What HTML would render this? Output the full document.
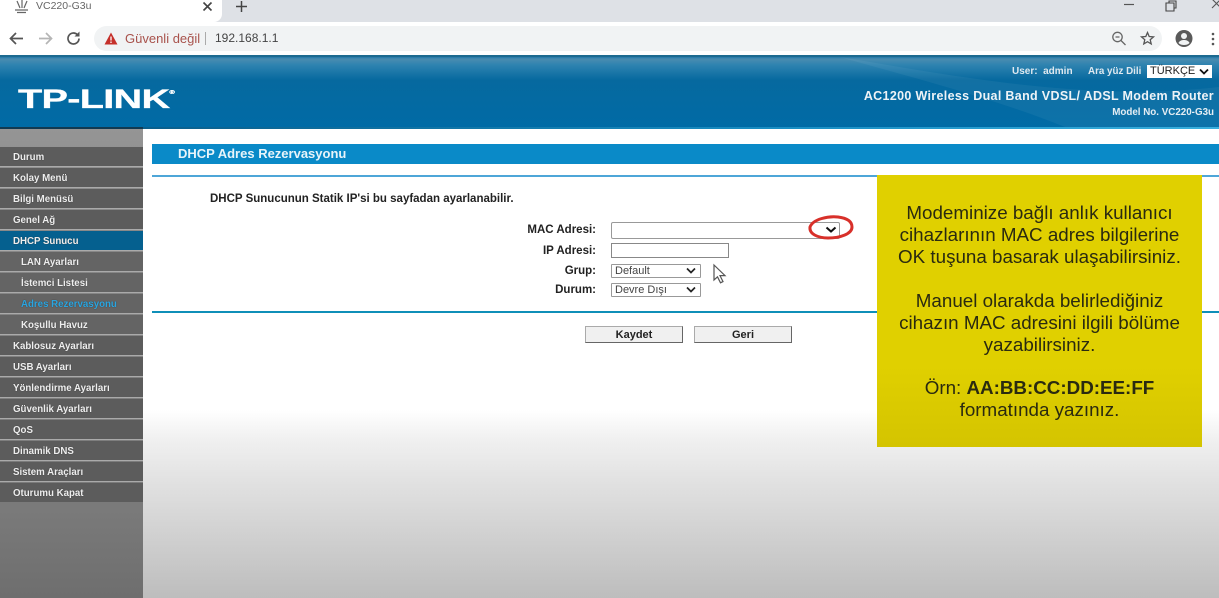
<!DOCTYPE html>
<html><head><meta charset="utf-8">
<style>
html,body{margin:0;padding:0;width:1219px;height:598px;overflow:hidden;background:#fff;font-family:"Liberation Sans",sans-serif}
.a{position:absolute;white-space:nowrap}
.m{position:absolute;left:0;width:143px;height:19px;background:#5c5c5c;color:#eee;font:bold 9.700px/21px "Liberation Sans",sans-serif;padding-left:13px;box-sizing:border-box;text-shadow:0 0 1px #333;box-shadow:0 1px 0 #aaa}
.s{padding-left:21px;background:#646464}
.l{position:absolute;text-align:right;left:440px;width:156px;font:bold 11.500px/14px "Liberation Sans",sans-serif;color:#222}
.sel{position:absolute;left:611px;height:14px;box-sizing:border-box;border:1px solid #999;background:#fff;font:11px/13px "Liberation Sans",sans-serif;color:#444;padding-left:3px;border-radius:1px}
.b{position:absolute;top:326px;width:98px;height:17px;box-sizing:border-box;background:#f0f0f0;border:1px solid #666;border-top-color:#aaa;border-left-color:#aaa;text-align:center;font:bold 11px/16px "Liberation Sans",sans-serif;color:#222}
.y{position:absolute;left:877px;width:325px;text-align:center;font:18.800px/22px "Liberation Sans",sans-serif;color:#2a2a10}
</style></head><body>
<div class="a" style="left:0;top:0;width:1219px;height:22px;background:#dee1e6"></div>
<div class="a" style="left:0;top:0;width:222px;height:22px;background:#fff;border-radius:0 0 8px 0"></div>
<svg class="a" style="left:14px;top:0" width="16" height="14" viewBox="0 0 16 14"><path d="M1 10h13M3 12.500h9M3 1l3 7M8 0v8M13 1l-3 7" stroke="#666" stroke-width="1.200" fill="none"/></svg>
<div class="a" style="left:36px;top:0;font:10.500px/13px 'Liberation Sans',sans-serif;color:#666">VC220-G3u</div>
<svg class="a" style="left:202px;top:1px" width="11" height="11"><path d="M1.500 1.500l8 8M9.500 1.500l-8 8" stroke="#444" stroke-width="1.600"/></svg>
<svg class="a" style="left:235px;top:0" width="13" height="13"><path d="M6.500 1v11M1 6.500h11" stroke="#444" stroke-width="1.500"/></svg>
<svg class="a" style="left:1120px;top:0" width="99" height="14"><path d="M4 4.500h10" stroke="#555" stroke-width="1.200"/><path d="M46 3h8v8h-8zM49 3V1h7v7h-2" stroke="#444" stroke-width="1.100" fill="none"/><path d="M92 -1l9 9M101 -1l-9 9" stroke="#555" stroke-width="1.100"/></svg>
<div class="a" style="left:0;top:22px;width:1219px;height:33px;background:#fff"></div>
<svg class="a" style="left:8px;top:30px" width="72" height="17"><path d="M15 8.500H3M8 3L2.500 8.500 8 14" stroke="#555" stroke-width="1.700" fill="none"/><path d="M31 8.500h12M38 3l5.500 5.500L38 14" stroke="#b5b5b5" stroke-width="1.700" fill="none"/><path d="M71 8.500a5.500 5.500 0 1 1-1.700-4" stroke="#555" stroke-width="1.700" fill="none"/><path d="M71.500 1.500v5h-5z" fill="#555"/></svg>
<div class="a" style="left:94px;top:26px;width:1068px;height:25px;border-radius:13px;background:#f1f3f4"></div>
<svg class="a" style="left:104px;top:32px" width="14" height="13"><path d="M7 0.500l6.500 12H.5z" fill="#c5302a"/><path d="M7 4.500v4M7 9.500v1.500" stroke="#fff" stroke-width="1.300"/></svg>
<div class="a" style="left:125px;top:30px;font:13px/17px 'Liberation Sans',sans-serif;color:#a8524c">Güvenli değil</div>
<div class="a" style="left:205px;top:32px;width:1px;height:13px;background:#aaa"></div>
<div class="a" style="left:215px;top:30px;font:12px/17px 'Liberation Sans',sans-serif;color:#444">192.168.1.1</div>
<svg class="a" style="left:1110px;top:30px" width="85" height="17"><circle cx="7.500" cy="7" r="4.700" stroke="#666" stroke-width="1.300" fill="none"/><path d="M11 10.500l4.500 4.500M5.500 7h4" stroke="#666" stroke-width="1.300"/><path d="M37.500 2.500l1.700 4 4.300.4-3.300 2.800 1 4.200-3.700-2.200-3.700 2.200 1-4.200-3.300-2.800 4.300-.4z" stroke="#555" stroke-width="1.300" fill="none"/><circle cx="74" cy="8.500" r="8.500" fill="#5a5a5a"/><circle cx="74" cy="6" r="3" fill="#f1f3f4"/><path d="M68.500 13c1-2.500 3.500-3 5.500-3s4.500.5 5.500 3c-1.500 1.500-3.500 2-5.500 2s-4-.5-5.500-2z" fill="#f1f3f4"/></svg>
<svg class="a" style="left:1209px;top:32px" width="10" height="14"><circle cx="4" cy="2" r="1.300" fill="#555"/><circle cx="4" cy="7" r="1.300" fill="#555"/><circle cx="4" cy="12" r="1.300" fill="#555"/></svg>

<div class="a" style="left:0;top:55px;width:1219px;height:74px;background:linear-gradient(#1b6f9e 0,#0f6ea6 1px,#4a8cb0 4px,#2e83b0 10px,#06699f 25px,#006ba6 100%);"></div>
<div class="a" style="left:0;top:55px;width:1219px;height:2px;background:#1d6a90"></div>
<svg class="a" style="left:840px;top:57px" width="379" height="70"><path d="M0 0C70 20 150 40 225 70L379 70V30C250 45 120 20 0 0z" fill="#fff" opacity=".05"/></svg>
<div class="a" style="left:143px;top:127px;width:1076px;height:2px;background:linear-gradient(90deg,#0a5f8c,#1a8fc4 60%,#3ab0de)"></div>
<div class="a" style="left:0;top:127px;width:143px;height:2px;background:#113a52"></div>
<div class="a" style="left:18px;top:76px;font:bold 27px/34px 'Liberation Sans',sans-serif;color:#fff;transform:scaleX(1.470);transform-origin:left;letter-spacing:-0.500px;-webkit-text-stroke:.3px #fff">TP-LINK<span style="font-size:5px;vertical-align:14px;letter-spacing:0">®</span></div>
<div class="a" style="left:1012px;top:65px;font:bold 10px/13px 'Liberation Sans',sans-serif;color:#dfe9f0">User:&nbsp; admin</div>
<div class="a" style="left:1088px;top:65px;font:bold 9.800px/13px 'Liberation Sans',sans-serif;color:#dfe9f0">Ara yüz Dili</div>
<div class="a" style="left:1147px;top:65px;width:65px;height:13px;background:#fff;font:11px/13px 'Liberation Sans',sans-serif;color:#222;padding-left:3px;box-sizing:border-box">TÜRKÇE<svg style="position:absolute;left:52px;top:3px" width="10" height="7"><path d="M1 1.500l4 4 4-4" stroke="#111" stroke-width="1.800" fill="none"/></svg></div>
<div class="a" style="right:5px;top:88px;font:bold 12.500px/16px 'Liberation Sans',sans-serif;color:#eef3f7;letter-spacing:.33px">AC1200 Wireless Dual Band VDSL/ ADSL Modem Router</div>
<div class="a" style="right:5px;top:106px;font:bold 9.800px/13px 'Liberation Sans',sans-serif;color:#e4edf3">Model No. VC220-G3u</div>

<div class="a" style="left:0;top:129px;width:143px;height:469px;background:linear-gradient(#959595,#8a8a8a 80px,#7a7a7a 380px,#6e6e6e)"></div>
<div class="a" style="left:143px;top:129px;width:1076px;height:469px;background:linear-gradient(#fff 0,#fff 281px,#f0f0f0 311px,#e2e2e2 351px,#cfcfcf 411px,#bdbdbd 469px)"></div>

<div class="m" style="top:147px">Durum</div>
<div class="m" style="top:168px">Kolay Menü</div>
<div class="m" style="top:189px">Bilgi Menüsü</div>
<div class="m" style="top:210px">Genel Ağ</div>
<div class="m" style="top:231px;background:#05608f">DHCP Sunucu</div>
<div class="m s" style="top:252px">LAN Ayarları</div>
<div class="m s" style="top:273px">İstemci Listesi</div>
<div class="m s" style="top:294px;color:#2aa5e0">Adres Rezervasyonu</div>
<div class="m s" style="top:315px">Koşullu Havuz</div>
<div class="m" style="top:336px">Kablosuz Ayarları</div>
<div class="m" style="top:357px">USB Ayarları</div>
<div class="m" style="top:378px">Yönlendirme Ayarları</div>
<div class="m" style="top:399px">Güvenlik Ayarları</div>
<div class="m" style="top:420px">QoS</div>
<div class="m" style="top:441px">Dinamik DNS</div>
<div class="m" style="top:462px">Sistem Araçları</div>
<div class="m" style="top:483px;box-shadow:none">Oturumu Kapat</div>

<div class="a" style="left:152px;top:144px;width:1067px;height:20px;background:#0a8ac8;color:#e8f4fa;font:bold 13px/20px 'Liberation Sans',sans-serif;padding-left:26px;box-sizing:border-box">DHCP Adres Rezervasyonu</div>
<div class="a" style="left:152px;top:175px;width:1067px;height:2px;background:#4ea6d8"></div>
<div class="a" style="left:210px;top:192px;font:bold 11.500px/14px 'Liberation Sans',sans-serif;color:#222">DHCP Sunucunun Statik IP'si bu sayfadan ayarlanabilir.</div>

<div class="l" style="top:223px">MAC Adresi:</div>
<div class="l" style="top:244px">IP Adresi:</div>
<div class="l" style="top:264px">Grup:</div>
<div class="l" style="top:283px">Durum:</div>
<div class="a" style="left:611px;top:222px;width:229px;height:17px;box-sizing:border-box;border:1px solid #999;background:#fff;border-radius:2px"></div>
<div class="a" style="left:611px;top:243px;width:118px;height:15px;box-sizing:border-box;border:1px solid #888;background:#fff"></div>
<div class="sel" style="top:264px;width:90px">Default<svg style="position:absolute;left:74px;top:2px" width="10" height="7"><path d="M1 1.500l4 4 4-4" stroke="#222" stroke-width="1.700" fill="none"/></svg></div>
<div class="sel" style="top:283px;width:90px">Devre Dışı<svg style="position:absolute;left:74px;top:2px" width="10" height="7"><path d="M1 1.500l4 4 4-4" stroke="#222" stroke-width="1.700" fill="none"/></svg></div>
<svg class="a" style="left:806px;top:212px" width="50" height="34" viewBox="0 0 50 34"><path d="M4 15C7 7 22 4 32 5c8 1 14 4 14 10 0 7-12 11-24 11C12 26 3 22 4 15z" fill="none" stroke="#d8302a" stroke-width="3"/><path d="M20.500 15.500l4.500 4 4.500-4" stroke="#111" stroke-width="2" fill="none"/></svg>
<svg class="a" style="left:712px;top:263px" width="16" height="22"><path d="M2 2v15l3.500-3.200 3 6 2.500-1.200-3-6h5z" fill="#fff" stroke="#555" stroke-width="1.200"/></svg>
<div class="a" style="left:152px;top:311px;width:1067px;height:2px;background:#0f8fb8"></div>
<div class="b" style="left:585px">Kaydet</div>
<div class="b" style="left:694px">Geri</div>

<div class="a" style="left:877px;top:175px;width:325px;height:272px;background:linear-gradient(#e0d000,#e0d000 70%,#d4c400)"></div>
<div class="y" style="top:202px">Modeminize bağlı anlık kullanıcı</div>
<div class="y" style="top:224px">cihazlarının MAC adres bilgilerine</div>
<div class="y" style="top:246px">OK tuşuna basarak ulaşabilirsiniz.</div>
<div class="y" style="top:290px">Manuel olarakda belirlediğiniz</div>
<div class="y" style="top:312px">cihazın MAC adresini ilgili bölüme</div>
<div class="y" style="top:334px">yazabilirsiniz.</div>
<div class="y" style="top:377px">Örn: <b>AA:BB:CC:DD:EE:FF</b></div>
<div class="y" style="top:399px">formatında yazınız.</div>
</body></html>
